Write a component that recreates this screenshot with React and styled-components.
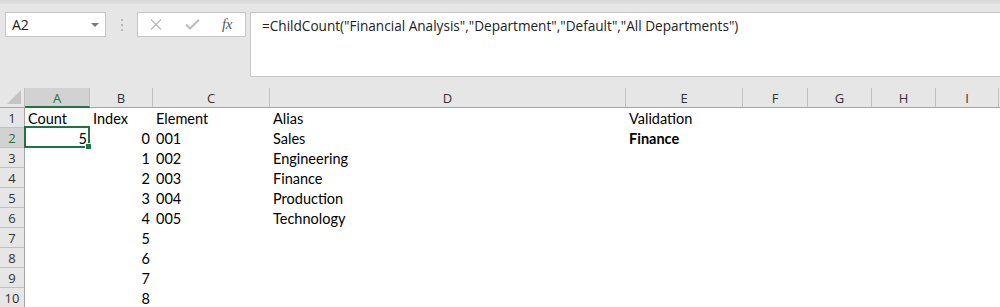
import React from "react";
import styled, { createGlobalStyle } from "styled-components";

const GlobalStyle = createGlobalStyle`
  html, body { margin: 0; padding: 0; background: #ffffff; }
  body { font-family: "Lato", "Liberation Sans", sans-serif; overflow: hidden; }
`;

const GREEN = "#217346";
const COLS = [
  { key: "A", w: 65 },
  { key: "B", w: 63 },
  { key: "C", w: 117 },
  { key: "D", w: 356 },
  { key: "E", w: 117 },
  { key: "F", w: 65 },
  { key: "G", w: 64 },
  { key: "H", w: 64 },
  { key: "I", w: 63 },
];
const TEMPLATE = `25px ${COLS.map((c) => c.w + "px").join(" ")} 1fr`;

const ROWS = [
  { A: ["Count"], B: ["Index"], C: ["Element"], D: ["Alias"], E: ["Validation"] },
  { A: ["5", "r"], B: ["0", "r"], C: ["001"], D: ["Sales"], E: ["Finance", "b"] },
  { B: ["1", "r"], C: ["002"], D: ["Engineering"] },
  { B: ["2", "r"], C: ["003"], D: ["Finance"] },
  { B: ["3", "r"], C: ["004"], D: ["Production"] },
  { B: ["4", "r"], C: ["005"], D: ["Technology"] },
  { B: ["5", "r"] },
  { B: ["6", "r"] },
  { B: ["7", "r"] },
  { B: ["8", "r"] },
];

const Page = styled.div`
  width: 1000px;
  height: 307px;
  overflow: hidden;
  background: #ffffff;
`;

const TopBand = styled.div`
  height: 4px;
  background: linear-gradient(#d6d6d6, #e2e2e2);
`;

const Toolbar = styled.div`
  display: flex;
  align-items: flex-start;
  height: 84px;
  box-sizing: border-box;
  padding: 8px 0 0 5px;
  background: #e6e6e6;
`;

const NameBox = styled.div`
  width: 101px;
  height: 25px;
  box-sizing: border-box;
  border: 1px solid #c6c6c6;
  background: #ffffff;
  display: flex;
  align-items: center;
  justify-content: space-between;
  padding: 0 6px 0 6px;
  font-family: "Open Sans", "Noto Sans", sans-serif;
  font-size: 14px;
  color: #222;
`;

const Caret = styled.span`
  width: 0;
  height: 0;
  border-left: 4px solid transparent;
  border-right: 4px solid transparent;
  border-top: 4px solid #7a7a7a;
  margin-top: 1px;
`;

const Grip = styled.div`
  width: 31px;
  height: 25px;
  display: flex;
  flex-direction: column;
  align-items: center;
  justify-content: center;
  gap: 3px;
`;

const Dot = styled.span`
  width: 2px;
  height: 2px;
  background: #b8b8b8;
`;

const ButtonBox = styled.div`
  width: 109px;
  height: 25px;
  box-sizing: border-box;
  border: 1px solid #c6c6c6;
  background: #ffffff;
  display: flex;
  align-items: center;
  padding-left: 12px;
`;

const IconSlot = styled.div`
  width: ${(p) => p.w}px;
  display: flex;
  align-items: center;
`;

const Fx = styled.span`
  font-family: "Liberation Serif", "DejaVu Serif", serif;
  font-style: italic;
  font-size: 15px;
  color: #5a5a5a;
  letter-spacing: -0.5px;
  line-height: 1;
`;

const FormulaBox = styled.div`
  flex: 1;
  margin-left: 4px;
  margin-right: -2px;
  height: 65px;
  box-sizing: border-box;
  border: 1px solid #c6c6c6;
  background: #ffffff;
  padding: 3px 0 0 11px;
  font-family: "Open Sans", "Noto Sans", sans-serif;
  font-size: 13.6px;
  color: #222;
  white-space: nowrap;
`;

const Grid = styled.div`
  display: grid;
  grid-template-columns: ${TEMPLATE};
  grid-auto-rows: 20px;
`;

const Corner = styled.div`
  background: #e6e6e6;
  border-bottom: 1px solid #a6a6a6;
  border-right: 1px solid #c0c0c0;
  box-sizing: border-box;
  display: flex;
  align-items: flex-end;
  justify-content: flex-end;
  padding: 0 3px 3px 0;
`;

const Triangle = styled.span`
  width: 0;
  height: 0;
  border-left: 14px solid transparent;
  border-bottom: 14px solid #c4c4c4;
`;

const ColHead = styled.div`
  background: ${(p) => (p.$sel ? "#d2d2d2" : "#e6e6e6")};
  border-bottom: ${(p) => (p.$sel ? `2px solid ${GREEN}` : "1px solid #a6a6a6")};
  border-right: 1px solid #c0c0c0;
  box-sizing: border-box;
  display: flex;
  align-items: center;
  justify-content: center;
  font-family: "Open Sans", "Noto Sans", sans-serif;
  font-size: 13px;
  color: ${(p) => (p.$sel ? GREEN : "#333")};
  padding-top: ${(p) => (p.$sel ? "1px" : "0")};
`;

const RowHead = styled.div`
  background: ${(p) => (p.$sel ? "#d2d2d2" : "#e6e6e6")};
  border-bottom: 1px solid #c0c0c0;
  border-right: 1px solid #a6a6a6;
  box-sizing: border-box;
  display: flex;
  align-items: center;
  justify-content: center;
  font-family: "Open Sans", "Noto Sans", sans-serif;
  font-size: 13px;
  color: ${(p) => (p.$sel ? GREEN : "#333")};
`;

const Cell = styled.div`
  position: relative;
  display: flex;
  align-items: center;
  justify-content: ${(p) => (p.$right ? "flex-end" : "flex-start")};
  padding: 0 3px 0 3px;
  box-sizing: border-box;
  font-family: "Lato", "Liberation Sans", sans-serif;
  font-size: 14.5px;
  font-weight: ${(p) => (p.$bold ? 700 : 400)};
  color: #000;
  white-space: nowrap;
  overflow: visible;
`;

const Selection = styled.div`
  position: absolute;
  top: -2px;
  left: -1px;
  right: 0;
  bottom: 0;
  border: 2px solid ${GREEN};
  pointer-events: none;
`;

const Handle = styled.span`
  position: absolute;
  right: -4px;
  bottom: -4px;
  width: 5px;
  height: 5px;
  background: ${GREEN};
  border: 1px solid #fff;
`;

function XIcon() {
  return (
    <svg width="12" height="11" viewBox="0 0 12 11">
      <path d="M1 0.5 L11 10.5 M11 0.5 L1 10.5" stroke="#b9b9b9" strokeWidth="1.3" fill="none" />
    </svg>
  );
}

function CheckIcon() {
  return (
    <svg width="15" height="11" viewBox="0 0 15 11">
      <path d="M1 5.5 L5 9.5 L14 0.8" stroke="#bdbdbd" strokeWidth="2" fill="none" />
    </svg>
  );
}

export default function App() {
  return (
    <Page>
      <GlobalStyle />
      <TopBand />
      <Toolbar>
        <NameBox>
          <span>A2</span>
          <Caret />
        </NameBox>
        <Grip>
          <Dot />
          <Dot />
          <Dot />
        </Grip>
        <ButtonBox>
          <IconSlot w={35}>
            <XIcon />
          </IconSlot>
          <IconSlot w={37}>
            <CheckIcon />
          </IconSlot>
          <IconSlot w={20}>
            <Fx>fx</Fx>
          </IconSlot>
        </ButtonBox>
        <FormulaBox>=ChildCount("Financial Analysis","Department","Default","All Departments")</FormulaBox>
      </Toolbar>
      <Grid>
        <Corner>
          <Triangle />
        </Corner>
        {COLS.map((c) => (
          <ColHead key={c.key} $sel={c.key === "A"}>
            {c.key}
          </ColHead>
        ))}
        <ColHead />
        {ROWS.map((row, i) => (
          <React.Fragment key={i}>
            <RowHead $sel={i === 1}>{i + 1}</RowHead>
            {COLS.map((c) => {
              const v = row[c.key];
              const isSel = i === 1 && c.key === "A";
              return (
                <Cell key={c.key} $right={v && v[1] === "r"} $bold={v && v[1] === "b"}>
                  {v ? v[0] : null}
                  {isSel && (
                    <Selection>
                      <Handle />
                    </Selection>
                  )}
                </Cell>
              );
            })}
            <Cell />
          </React.Fragment>
        ))}
      </Grid>
    </Page>
  );
}
